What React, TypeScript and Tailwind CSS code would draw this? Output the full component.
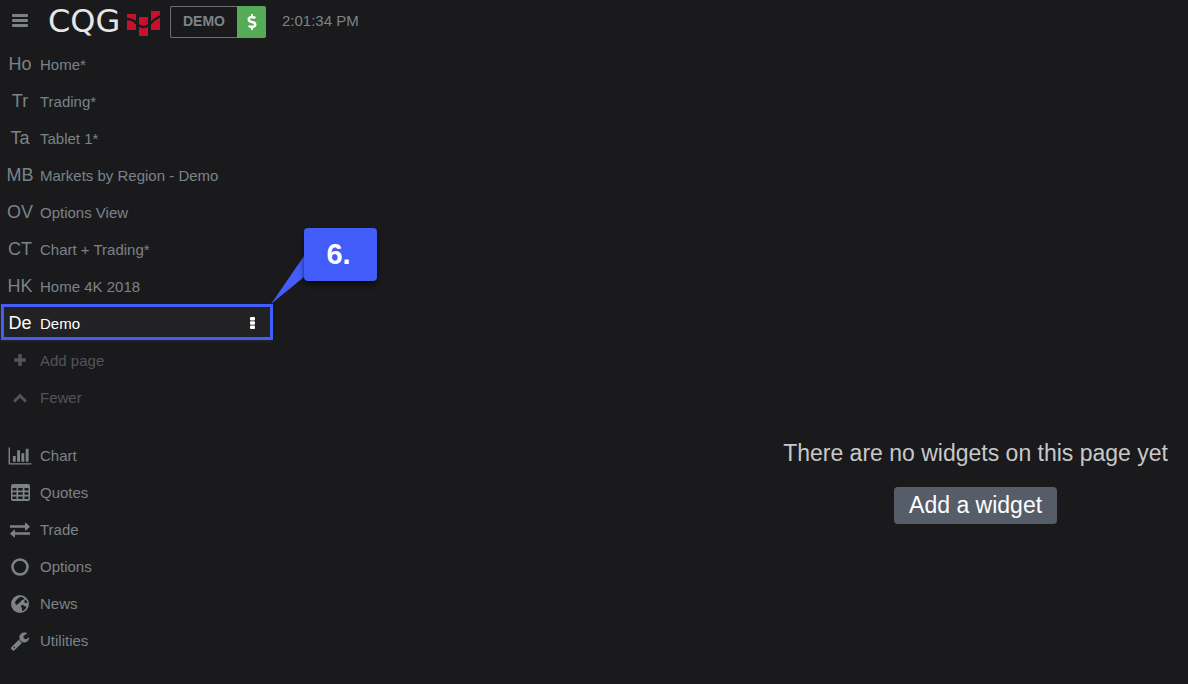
import { FC, ReactNode } from "react";
import { FaDollarSign } from "react-icons/fa";

interface NavItem {
    icon: ReactNode;
    label: string;
}

const pages = [
    { short: "Ho", label: "Home*" },
    { short: "Tr", label: "Trading*" },
    { short: "Ta", label: "Tablet 1*" },
    { short: "MB", label: "Markets by Region - Demo" },
    { short: "OV", label: "Options View" },
    { short: "CT", label: "Chart + Trading*" },
    { short: "HK", label: "Home 4K 2018" },
];

const PlusIcon = () => (
    <svg width="12" height="12" viewBox="0 0 12 12" fill="currentColor" className="mb-px">
        <path d="M5 0h2q.8 0 .8.8v3.400h3.400q.8 0 .8.8v2q0 .8-.8.8H7.800v3.400q0 .8-.8.8H5q-.8 0-.8-.8V7.800H.8Q0 7.800 0 7V5q0-.8.8-.8h3.400V.8Q4.200 0 5 0z" />
    </svg>
);

const ChevronUpIcon = () => (
    <svg width="14" height="10" viewBox="0 0 14 10" fill="none" stroke="currentColor" strokeWidth="3">
        <path d="M1.200 8.500 7 2.700l5.800 5.800" />
    </svg>
);

const ChartIcon = () => (
    <svg width="24" height="20" viewBox="0 0 2048 1792" fill="currentColor">
        <path d="M640 896v512h-256v-512h256zm384-512v1024h-256v-1024h256zm1024 1152v128h-2048v-1536h128v1408h1920zm-640-896v768h-256v-768h256zm384-384v1152h-256v-1152h256z" />
    </svg>
);

const TableIcon = () => (
    <svg width="19" height="17" viewBox="0 0 19 17" fill="currentColor" fillRule="evenodd">
        <path d="M2 0h15q2 0 2 2v13q0 2-2 2H2q-2 0-2-2V2Q0 0 2 0zM1.500 4v2.500h4V4zM7.200 4v2.500h4.500V4zM13.500 4v2.500h4V4zM1.500 8.300v2.500h4v-2.500zM7.200 8.300v2.500h4.500v-2.500zM13.500 8.300v2.500h4v-2.500zM1.500 12.600v2.500h4v-2.500zM7.200 12.600v2.500h4.500v-2.500zM13.500 12.600v2.500h4v-2.500z" />
    </svg>
);

const ExchangeIcon = () => (
    <svg width="20" height="16" viewBox="0 0 20 16" fill="currentColor">
        <path d="M0 3.200h15V1q0-.8.7-.3l4 3.500q.4.400 0 .8l-4 3.400q-.7.500-.7-.3V5.800H0zM20 10.200H5V8q0-.8-.7-.3l-4 3.500q-.4.400 0 .8l4 3.400q.7.500.7-.3v-2.400h15z" />
    </svg>
);

const CircleIcon = () => (
    <svg width="18" height="18" viewBox="0 0 18 18" fill="none" stroke="currentColor" strokeWidth="2.600">
        <circle cx="9" cy="9" r="7.500" />
    </svg>
);

const GlobeIcon = () => (
    <svg width="18" height="18" viewBox="0 0 18 18">
        <circle cx="9" cy="9" r="9" fill="currentColor" />
        <path fill="#1a1a1c" d="M7.500 3 10 1.700l1.500.8 1.800.8-1 1.500-1.800.4-.7 1.600-1.800 1-.8 1.400-1.400-.2.200 1.200-1.200-.6-.7-1.600.4-2 1.500-1.500zM10 10.500l1.800-.4 1.600.9 2 .7-.6 1.900-1.700 1.400-1.500 1.300-.7-1.700.3-1.500-1.200-1.200zM14.200 4.200l1.500 1.900.8 2.200-1.300-.6-1.400.3-.5-1.800z" />
    </svg>
);

const WrenchIcon = () => (
    <svg width="20" height="20" viewBox="0 0 1792 1792" fill="currentColor">
        <path d="M448 1472q0-26-19-45t-45-19-45 19-19 45 19 45 45 19 45-19 19-45zm644-420l-682 682q-37 37-90 37-52 0-91-37l-106-108q-38-36-38-90 0-53 38-91l681-681q39 98 114.500 173.500t173.500 114.500zm634-435q0 39-23 106-47 134-164.500 217.500t-258.500 83.500q-185 0-316.500-131.500t-131.500-316.500 131.500-316.500 316.500-131.500q58 0 121.500 16.500t107.500 46.500q16 11 16 28t-16 28l-293 169v224l193 107q5-3 79-48.500t135.500-81 70.500-35.500q15 0 23.500 10t8.500 25z" />
    </svg>
);

const tools: NavItem[] = [
    { icon: <ChartIcon />, label: "Chart" },
    { icon: <TableIcon />, label: "Quotes" },
    { icon: <ExchangeIcon />, label: "Trade" },
    { icon: <CircleIcon />, label: "Options" },
    { icon: <GlobeIcon />, label: "News" },
    { icon: <WrenchIcon />, label: "Utilities" },
];

const Logo = () => (
    <a href="#" className="ml-2 flex h-[42px] w-[112px] items-center justify-between">
        <span className="font-['DejaVu_Sans',sans-serif] text-[32px] leading-10 text-[#e6e6e6]">CQG</span>
        <svg width="33" height="26" viewBox="0 0 33 26" className="mt-1.5 shrink-0">
            <path fill="#c8102e" d="M0 3h9v16H0zM12 6h9v19h-9zM24 0h9v19h-9z" />
            <path fill="none" stroke="#1a1a1c" strokeWidth="2.400" d="M-1 8q7 0 10 4l3 2.500q4.500 3 9 0l3-2.500Q27 8 34 5" />
        </svg>
    </a>
);

const Initials: FC<{ text: string }> = ({ text }) => <span className="pb-0.5">{text}</span>;

const NavLink: FC<NavItem> = ({ icon, label }) => (
    <a href="#" className="flex h-[37px] items-center">
        <span className="flex w-10 shrink-0 justify-center text-lg">{icon}</span>
        <span className="pt-0.5">{label}</span>
    </a>
);

const Header = () => (
    <header className="flex h-[46px] items-start">
        <button aria-label="Menu" className="flex h-[42px] w-10 items-center justify-center">
            <svg width="16" height="14" viewBox="0 0 16 14" fill="currentColor">
                <rect width="16" height="3" rx="1" />
                <rect y="5" width="16" height="3" rx="1" />
                <rect y="10" width="16" height="3" rx="1" />
            </svg>
        </button>
        <Logo />
        <div className="ml-[10px] mt-[6px] flex h-8">
            <button className="rounded-l-xs border border-r-0 border-[#6b7075] px-3 pb-0.5 text-sm font-bold">DEMO</button>
            <button aria-label="Account" className="flex w-[29px] items-center justify-center rounded-r-xs bg-[#56ab56] text-white">
                <FaDollarSign size={16} />
            </button>
        </div>
        <time className="ml-4 mt-[9px] leading-6">2:01:34 PM</time>
    </header>
);

const Callout = () => (
    <div className="pointer-events-none absolute -top-px left-px h-9 w-[272px] border-3 border-[#435dfb]">
        <svg width="33" height="50" viewBox="0 0 33 50" className="absolute -top-[53px] left-[267px]">
            <path fill="#435dfb" d="M0 50 33 2v21z" />
        </svg>
        <div className="absolute -top-[79px] left-[300px] flex h-[53px] w-[73px] items-center justify-center rounded-sm bg-[#435dfb] pr-1 text-[29px] font-bold text-white shadow-md shadow-black/60">
            6.
        </div>
    </div>
);

const App = () => {
    return (
        <div className="flex min-h-screen flex-col bg-[#1a1a1c] font-['Liberation_Sans',Arial,sans-serif] text-[15px] text-[#7b8388]">
            <Header />
            <div className="flex flex-1">
                <nav className="w-[272px] shrink-0">
                    {pages.map((page) => (
                        <NavLink key={page.short} icon={<Initials text={page.short} />} label={page.label} />
                    ))}
                    <div className="relative flex items-start bg-[#222224] text-white">
                        <div className="flex-1">
                            <NavLink icon={<Initials text="De" />} label="Demo" />
                        </div>
                        <button aria-label="Page options" className="flex h-9 w-10 items-center justify-center">
                            <svg width="5" height="12" viewBox="0 0 5 12" fill="currentColor">
                                <rect width="5" height="3.400" rx="1" />
                                <rect y="4.300" width="5" height="3.400" rx="1" />
                                <rect y="8.600" width="5" height="3.400" rx="1" />
                            </svg>
                        </button>
                        <Callout />
                    </div>
                    <div className="text-[#505559]">
                        <NavLink icon={<PlusIcon />} label="Add page" />
                        <NavLink icon={<ChevronUpIcon />} label="Fewer" />
                    </div>
                    <div className="mt-[21px]">
                        {tools.map((tool) => (
                            <NavLink key={tool.label} icon={tool.icon} label={tool.label} />
                        ))}
                    </div>
                </nav>
                <main className="flex flex-1 flex-col items-end justify-end px-5 pb-40 text-[23px]">
                    <div className="flex flex-col items-center gap-5">
                        <p className="leading-7 text-[#c8c8c8]">There are no widgets on this page yet</p>
                        <button className="rounded-sm bg-[#565d68] px-[15px] pt-0.5 pb-[3px] leading-8 text-white">Add a widget</button>
                    </div>
                </main>
            </div>
        </div>
    );
};

export default App;
